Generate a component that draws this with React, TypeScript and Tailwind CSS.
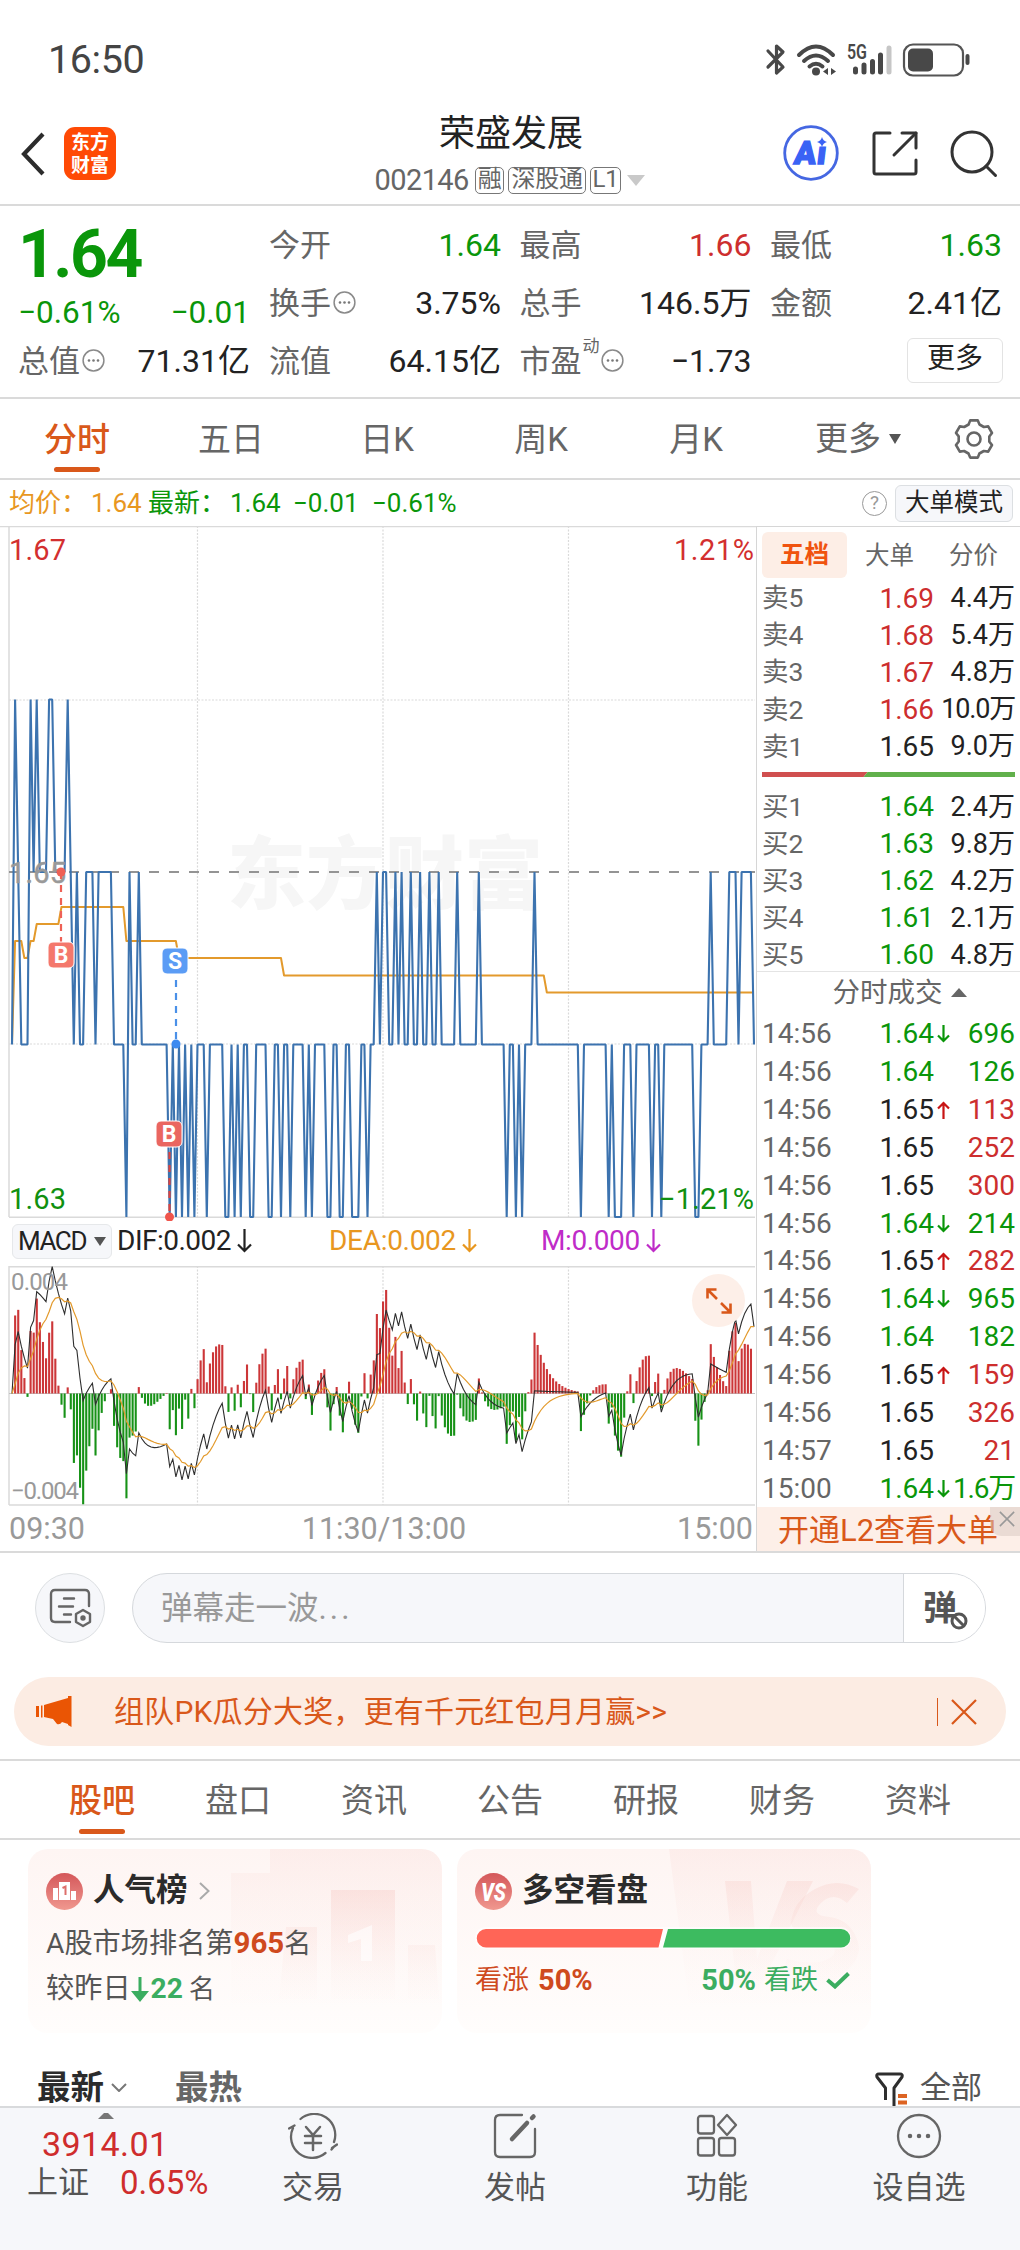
import React from 'react';

/* ---------- price series: run-length list of price levels per minute ---------- */
const RUNS =
  'L1 H1 M1 L3 H1 M1 H1 M3 H2 M4 H1 M1 L1 M1 L2 M3 L1 M5 L4 B1 M1 L2 M1 L9 B1 L1 B1 L1 B1 L1 B1 L1 B1 L3 B1 L5 B2 L1 B1 L1 B1 L2 B2 L4 B2 L2 B1 L2 B1 L4 B1 L1 B1 L4 B2 L2 B2 L2 B3 L2 B1 L2 M1 L1 M2 L2 M1 L1 M1 L2 M1 L2 M1 L2 M1 L2 M1 L5 M1 L6 M1 L8 B1 L2 B1 L1 B1 L3 M1 L14 B1 L8 B1 L1 B3 L3 B1 L5 B1 L2 B1 L10 B2 L3 M1 L5 M3 L1 M4 L1';
const LEVEL: Record<string, number> = { H: 1.66, M: 1.65, L: 1.64, B: 1.63 };
const prices: number[] = RUNS.split(' ').flatMap((r) => Array(Number(r.slice(1))).fill(LEVEL[r[0]]));

const STEP = 742 / 240;
const px = (i: number) => 12 + i * STEP;
const py = (p: number) => 1 + (1.67 - p) * 17250;

/* average price steps: [minute, y] */
const AVG: [number, number][] = [
  [0, 518], [1, 415], [3, 415], [4, 432], [5, 432], [6, 415], [7, 415], [8, 398], [15, 398], [16, 381],
  [36, 381], [37, 415], [53, 415], [54, 432], [87, 432], [88, 449.5], [172, 449.5], [173, 466.5], [240, 466.5],
];

function macd(series: number[]) {
  let e12 = series[0];
  let e26 = series[0];
  let dea = 0;
  return series.map((p) => {
    e12 += (p - e12) * (2 / 13);
    e26 += (p - e26) * (2 / 27);
    const dif = e12 - e26;
    dea += (dif - dea) * 0.2;
    return { dif, dea, bar: 2 * (dif - dea) };
  });
}
const MACD = macd(prices);
const my = (v: number) => Math.min(239, Math.max(0, 127.5 - v * 30570));
const linePts = (f: (m: { dif: number; dea: number }) => number) =>
  MACD.map((m, i) => `${px(i).toFixed(1)},${my(f(m)).toFixed(1)}`).join(' ');

const G = 'text-[#0a960a]';
const R = 'text-[#cd2e2e]';
const K = 'text-[#222]';

/* ---------- small pieces ---------- */
const Dots = () => (
  <svg className="w-[23px] h-[23px] shrink-0 ml-[2px] -mt-[2px]" viewBox="0 0 23 23">
    <circle cx="11.5" cy="11.5" r="10.4" fill="none" stroke="#8a8a8a" strokeWidth="1.5" />
    <circle cx="7" cy="11.5" r="1.3" fill="#777" /><circle cx="11.5" cy="11.5" r="1.3" fill="#777" /><circle cx="16" cy="11.5" r="1.3" fill="#777" />
  </svg>
);

const Badge = ({ children }: { children: React.ReactNode }) => (
  <span className="h-[27px] px-[2px] rounded-[5px] border-[1.5px] border-[#777] text-[24px] leading-[23px] tracking-[-0.3px] shrink-0">{children}</span>
);

function StatusBar() {
  return (
    <div className="h-[102px] pt-[18px] flex items-center pl-[48px] pr-[50px] justify-between">
      <span className="text-[39.5px] tracking-[-0.4px] text-[#444] w-[110px] leading-none">16:50</span>
      <svg className="w-[205px] h-[34px] overflow-visible" viewBox="0 0 205 34">
        <g fill="none" stroke="#484848" strokeWidth="3.2" strokeLinecap="round" strokeLinejoin="round">
          <path d="M3 8 L18 24 L11.500 30 V3 L18 9 L3 24" />
          <path d="M34 12 Q51 -5 68 12" strokeWidth="4" /><path d="M39 18 Q51 7 63 18" strokeWidth="4" /><path d="M44.500 23.500 Q51 18 57.500 23.500" strokeWidth="4" />
        </g>
        <circle cx="51" cy="28.500" r="4" fill="#484848" />
        <path d="M63 25v7l-5-3.500zM66 25v7l5-3.500z" fill="#484848" />
        <text x="82" y="16" className="text-[20px] font-semibold" fill="#484848" textLength="20" lengthAdjust="spacingAndGlyphs">5G</text>
        <g strokeWidth="5" strokeLinecap="round" stroke="#484848">
          <path d="M90.500 26v3M99 22v7M107.500 18.500v10.500M115.500 12v17" /><path d="M124 5v24" stroke="#c6c6c6" />
        </g>
        <rect x="139" y="1.500" width="59" height="31" rx="9" fill="none" stroke="#555" strokeWidth="2.200" />
        <rect x="143" y="5.500" width="25" height="23" rx="5" fill="#484848" />
        <rect x="200.500" y="11" width="4" height="11" rx="2" fill="#484848" />
      </svg>
    </div>
  );
}

function Header() {
  return (
    <div className="h-[104px] flex items-start border-b-[2px] border-[#dadada]">
      <svg className="w-[26px] h-[44px] ml-[20px] mt-[30px]" viewBox="0 0 26 44">
        <path d="M23 2 L4 22 L23 42" fill="none" stroke="#2c2c2c" strokeWidth="4.200" />
      </svg>
      <div className="ml-[18px] mt-[25px] w-[52px] h-[53px] rounded-[11px] bg-[#ff4a05] text-white text-[19px] font-bold leading-[23px] pt-[2px] flex flex-col items-center font-['Noto_Sans_CJK_SC']">
        <span>东方</span><span>财富</span>
      </div>
      <div className="ml-[260px] w-[270px] flex flex-col items-center">
        <div className="h-[63px] leading-[65px] text-[36px] text-[#222]">荣盛发展</div>
        <div className="h-[30px] flex items-center gap-[4px] text-[#666] ml-[-2px]">
          <span className="text-[29px] tracking-[-0.6px] leading-none mr-[2px]">002146</span>
          <Badge>融</Badge><Badge>深股通</Badge><Badge>L1</Badge>
          <svg className="w-[18px] h-[11px] ml-[2px]" viewBox="0 0 18 11"><path d="M0 0h18l-9 11z" fill="#c9c9c9" /></svg>
        </div>
      </div>
      <svg className="ml-[137px] mt-[23px] w-[56px] h-[56px]" viewBox="0 0 56 56">
        <circle cx="28" cy="28" r="26.300" fill="none" stroke="#4567e2" strokeWidth="2.800" />
        <text x="15" y="39" transform="skewX(-7)" className="text-[32px] font-black" fill="#3a62f5" stroke="#3a62f5" strokeWidth="1.400" textLength="32">Aı</text>
        <path d="M39 12q1 4 5 5q-4 1-5 5q-1-4-5-5q4-1 5-5z" fill="#3a62f5" />
      </svg>
      <svg className="ml-[32px] mt-[27px] w-[48px] h-[48px]" viewBox="0 0 48 48" fill="none" stroke="#333" strokeWidth="3" strokeLinecap="round" strokeLinejoin="round">
        <path d="M19 4H5q-2 0-2 2V43q0 2 2 2H43q2 0 2-2V31" /><path d="M31 4H45V19" /><path d="M45 4L23 26" />
      </svg>
      <svg className="ml-[31px] mt-[28px] w-[48px] h-[48px]" viewBox="0 0 48 48" fill="none" stroke="#333" strokeWidth="3" strokeLinecap="round">
        <circle cx="22" cy="22" r="20" /><path d="M36 36L45.500 45.500" />
      </svg>
    </div>
  );
}

const Cell = ({ label, value, color = K, icon, sup }: { label: string; value: string; color?: string; icon?: boolean; sup?: string }) => (
  <div className="flex items-center h-[58px] w-[232px] mr-[18.5px] leading-none">
    <span className="text-[31px] text-[#666]">{label}</span>
    {sup && <span className="text-[17px] text-[#666] mb-[30px] ml-[1px] -mr-[1px]">{sup}</span>}
    {icon && <Dots />}
    <span className={`ml-auto text-[32px] whitespace-nowrap ${color}`}>{value}</span>
  </div>
);

function Quote() {
  return (
    <div className="h-[193px] flex border-b-[2px] border-[#dadada] pt-[10px] pl-[18px]">
      <div className="w-[232px] mr-[19px]">
        <div className="h-[76px] text-[66px] font-bold leading-[78px] tracking-[-2.5px] text-[#0a960a] whitespace-nowrap">1.64</div>
        <div className="h-[40px] pt-[2px] flex justify-between items-center text-[31.5px] leading-none text-[#0a960a]"><span>−0.61%</span><span>−0.01</span></div>
        <div><Cell label="总值" value="71.31亿" icon /></div>
      </div>
      <div className="flex flex-col">
        <Cell label="今开" value="1.64" color={G} /><Cell label="换手" value="3.75%" icon /><Cell label="流值" value="64.15亿" />
      </div>
      <div className="flex flex-col">
        <Cell label="最高" value="1.66" color={R} /><Cell label="总手" value="146.5万" /><Cell label="市盈" value="−1.73" icon sup="动" />
      </div>
      <div className="flex flex-col">
        <Cell label="最低" value="1.63" color={G} /><Cell label="金额" value="2.41亿" />
        <div className="w-[96px] h-[45px] mt-[6px] ml-[137px] border-[1.5px] border-[#e3e3e3] rounded-[6px] text-[28px] leading-[40px] text-center text-[#222]">更多</div>
      </div>
    </div>
  );
}

function Gear() {
  const pts: string[] = [];
  for (let i = 0; i < 6; i++) {
    const a = (i * Math.PI) / 3 - Math.PI / 2;
    for (const [d, r] of [[-0.2, 19], [0.2, 19], [0.36, 15.5], [0.69, 15.5]] as const)
      pts.push(`${(20 + r * Math.cos(a + d)).toFixed(1)},${(20 + r * Math.sin(a + d)).toFixed(1)}`);
  }
  return (
    <svg className="w-[40px] h-[40px]" viewBox="0 0 40 40" fill="none" stroke="#666" strokeWidth="2.600" strokeLinejoin="round">
      <polygon points={pts.join(' ')} /><circle cx="20" cy="20" r="6.500" />
    </svg>
  );
}

function PeriodTabs() {
  return (
    <div className="h-[81px] flex text-[33px] text-[#666] border-b-[2px] border-[#dadada] leading-[81px]">
      <div className="w-[154px] text-center text-[#d9581a] font-medium flex flex-col items-center">分时
        <span className="w-[46px] h-[5px] rounded-full bg-[#d9581a] -mt-[13px]" /></div>
      <div className="w-[154px] text-center">五日</div>
      <div className="w-[158px] text-center">日K</div>
      <div className="w-[150px] text-center">周K</div>
      <div className="w-[160px] text-center">月K</div>
      <div className="w-[178px] pl-[39px] flex items-center">更多
        <svg className="w-[12px] h-[10px] ml-[8px]" viewBox="0 0 12 10"><path d="M0 0h12l-6 10z" fill="#555" /></svg></div>
      <div className="flex items-center h-[80px]"><Gear /></div>
    </div>
  );
}

function InfoRow() {
  return (
    <div className="h-[46px] flex items-center text-[26px] leading-none pl-[9px] pr-[7px] whitespace-nowrap">
      <span className="text-[#e8971f] w-[82px]">均价：</span><span className="text-[#e8971f] w-[57px]">1.64</span>
      <span className="text-[#0a960a] w-[82px]">最新：</span><span className="text-[#0a960a] w-[63px]">1.64</span>
      <span className="text-[#0a960a] w-[79px]">−0.01</span><span className="text-[#0a960a]">−0.61%</span>
      <span className="ml-auto w-[25px] h-[25px] rounded-full border-[1.7px] border-[#999] text-[#999] text-[19px] leading-[22px] text-center mr-[8px]">?</span>
      <span className="w-[118px] h-[37px] rounded-[6px] border-[1.5px] border-[#dcdfe2] bg-[#f6f7fa] text-[#222] text-[24.5px] leading-[33px] text-center">大单模式</span>
    </div>
  );
}

const Marker = ({ x, y, c, t }: { x: number; y: number; c: string; t: string }) => (
  <g>
    <rect x={x - 13} y={y - 13} width="26" height="26" rx="5" fill={c} stroke="#fff" strokeWidth="1" />
    <text x={x} y={y + 8} textAnchor="middle" fill="#fff" className="text-[23px] font-bold">{t}</text>
  </g>
);

function PriceChart() {
  return (
    <svg className="block w-[756px] h-[695px]" viewBox="0 0 756 695">
      <g stroke="#dadada" strokeWidth="1.200">
        <path d="M0 .6H756M9 0V691M9 691.300H755" strokeWidth="1.500" />
        <path d="M197.500 0V691M383 0V691M568.500 0V691M9 174H755M9 518H755" strokeDasharray="2 1.500" />
      </g>
      <text x="227" y="377" className="font-['Noto_Sans_CJK_SC'] text-[79px] font-black" fill="#f6f6f6">东方财富</text>
      <path d="M9 346H755" stroke="#949494" strokeWidth="2" strokeDasharray="10 10" />
      <polyline points={AVG.map(([i, y]) => `${px(i)},${y}`).join(' ')} fill="none" stroke="#e39a2c" strokeWidth="2" strokeLinejoin="round" />
      <polyline points={prices.map((p, i) => `${px(i).toFixed(1)},${py(p).toFixed(1)}`).join(' ')} fill="none" stroke="#3c73af" strokeWidth="2.100" strokeLinejoin="bevel" />
      <g className="text-[29px]">
        <text x="9" y="34" fill="#d32f2f" textLength="57">1.67</text>
        <text x="9" y="357" fill="#999" stroke="#999" strokeWidth=".5" textLength="57">1.65</text>
        <text x="9" y="683" fill="#109010" textLength="57">1.63</text>
        <text x="754" y="34" fill="#d32f2f" textAnchor="end" textLength="80">1.21%</text>
        <text x="754" y="683" fill="#109010" textAnchor="end" textLength="95">−1.21%</text>
      </g>
      <g strokeWidth="2.200" strokeDasharray="7 6">
        <path d="M61 346V416" stroke="#ee6156" /><path d="M176 454V518" stroke="#4a90e8" /><path d="M169.500 626V691" stroke="#dc4540" />
      </g>
      <circle cx="61" cy="346" r="4.500" fill="#ee6156" /><circle cx="176" cy="518" r="4.500" fill="#3c8af0" /><circle cx="169.500" cy="691" r="4.500" fill="#f0554c" />
      <Marker x={61} y={429} c="#f4786c" t="B" /><Marker x={175} y={435} c="#5b9cf5" t="S" /><Marker x={169} y={608} c="#ea6660" t="B" />
    </svg>
  );
}

const Down = ({ s }: { s: string }) => (
  <svg className="w-[15px] h-[25px] ml-[6px]" viewBox="0 0 15 25" fill="none" stroke={s} strokeWidth="2.200"><path d="M7.500 1V23M1 16.500L7.500 23L14 16.500" /></svg>
);

function MacdPanel() {
  return (
    <>
      <div className="h-[45px] flex items-center text-[27px] leading-none pl-[12px] pb-[6px] whitespace-nowrap">
        <span className="w-[100px] h-[35px] mt-[1px] rounded-[6px] border-[1.500px] border-[#e6e8ea] bg-[#f6f7fa] flex items-center justify-center text-[#222] text-[26px] tracking-[-1.4px]">MACD
          <svg className="w-[12px] h-[9px] ml-[8px]" viewBox="0 0 12 9"><path d="M0 0h12l-6 9z" fill="#555" /></svg></span>
        <span className="text-[#222] ml-[5px] w-[212px] flex items-center text-[28px] tracking-[-0.5px]">DIF:0.002<Down s="#222" /></span>
        <span className="text-[#e8971f] w-[212px] flex items-center text-[28px] tracking-[-0.3px]">DEA:0.002<Down s="#e8971f" /></span>
        <span className="text-[#bf2cc8] flex items-center text-[28px] tracking-[-0.4px]">M:0.000<Down s="#bf2cc8" /></span>
      </div>
      <div className="relative h-[240px]">
        <svg className="block w-[756px] h-[240px]" viewBox="0 0 756 240">
          <path d="M9 .7H755M9 0V239M9 239H755" stroke="#dadada" strokeWidth="1.500" />
          <path d="M197.500 0V239M383 0V239M568.500 0V239" stroke="#dadada" strokeWidth="1.200" strokeDasharray="2 1.500" />
          <path d="M9 127.500H755" stroke="#b5b5b5" strokeWidth=".8" />
          {MACD.slice(0, 240).map((m, i) => {
            const y = my(m.bar);
            return <rect key={i} x={px(i) - 1} y={Math.min(y, 127.5)} width="2.100" height={Math.abs(y - 127.5)} fill={m.bar > 0 ? '#cc3638' : '#179217'} />;
          })}
          <polyline points={linePts((m) => m.dif)} fill="none" stroke="#2e2e2e" strokeWidth="1.100" />
          <polyline points={linePts((m) => m.dea)} fill="none" stroke="#e39a2c" strokeWidth="1.200" />
          <g fill="#999" className="text-[24px]"><text x="11" y="24" textLength="57">0.004</text><text x="11" y="233" textLength="68">−0.004</text></g>
        </svg>
        <div className="absolute left-[692px] top-[8px] w-[53px] h-[53px] rounded-full bg-[#fdefe8]">
          <svg className="w-[53px] h-[53px]" viewBox="0 0 53 53" fill="none" stroke="#d9581a" strokeWidth="2.600"><path d="M24.500 15.500H15.500V24.500M15.500 15.500L25 25M29 29L38.500 38.500M29.500 38.500H38.500V29.500" /></svg>
        </div>
      </div>
      <div className="h-[45px] pt-[2px] flex items-center justify-between text-[30.5px] text-[#999] pl-[9px] pr-[3px] leading-none">
        <span>09:30</span><span className="pl-[6px]">11:30/13:00</span><span>15:00</span>
      </div>
    </>
  );
}

const SELL = [['卖5', '1.69', '4.4万', R], ['卖4', '1.68', '5.4万', R], ['卖3', '1.67', '4.8万', R], ['卖2', '1.66', '10.0万', R], ['卖1', '1.65', '9.0万', K]];
const BUY = [['买1', '1.64', '2.4万'], ['买2', '1.63', '9.8万'], ['买3', '1.62', '4.2万'], ['买4', '1.61', '2.1万'], ['买5', '1.60', '4.8万']];
const TRADES = [
  ['14:56', '1.64', 'd', '696', 'g'], ['14:56', '1.64', '', '126', 'g'], ['14:56', '1.65', 'u', '113', 'r'], ['14:56', '1.65', '', '252', 'r'],
  ['14:56', '1.65', '', '300', 'r'], ['14:56', '1.64', 'd', '214', 'g'], ['14:56', '1.65', 'u', '282', 'r'], ['14:56', '1.64', 'd', '965', 'g'],
  ['14:56', '1.64', '', '182', 'g'], ['14:56', '1.65', 'u', '159', 'r'], ['14:56', '1.65', '', '326', 'r'], ['14:57', '1.65', '', '21', 'r'], ['15:00', '1.64', 'd', '1.6万', 'g'],
];

const Level = ({ n, p, v, c }: { n: string; p: string; v: string; c: string }) => (
  <div className="h-[37.1px] flex items-center leading-none text-[27px] whitespace-nowrap">
    <span className="text-[#666] text-[26.5px] w-[90px]">{n}</span>
    <span className={`w-[82px] text-right text-[28px] ${c}`}>{p}</span>
    <span className={`text-[#222] ml-auto ${v.length > 4 ? 'tracking-[-1.2px]' : ''}`}>{v}</span>
  </div>
);

function OrderBook() {
  return (
    <div className="w-[264px] h-[1025px] border-l-[1.5px] border-[#d6d6d6] flex flex-col border-t-[1.500px]">
      <div className="pl-[5px] pr-[5px]">
        <div className="flex items-center mt-[5px] h-[46px] text-[24.5px] text-[#666] leading-none">
          <span className="w-[85px] h-[46px] rounded-[6px] bg-[#fdeee6] text-[#f0530f] font-bold leading-[46px] text-center">五档</span>
          <span className="w-[84px] pl-[18px] pt-[2px]">大单</span><span className="pl-[18px] pt-[2px]">分价</span>
        </div>
        <div className="mt-[2px]">{SELL.map(([n, p, v, c]) => <Level key={n} n={n} p={p} v={v} c={c} />)}</div>
        <div className="mt-[7px] h-[5px] flex">
          <svg className="w-[254px] h-[5px]" viewBox="0 0 254 5"><path d="M0 0H106L102 5H0z" fill="#d04f4f" /><path d="M106 0H254V5H102z" fill="#61b04b" /></svg>
        </div>
        <div className="mt-[11px]">{BUY.map(([n, p, v]) => <Level key={n} n={n} p={p} v={v} c={G} />)}</div>
      </div>
      <div className="border-t-[1.5px] border-[#e4e4e4] h-[44px] -mt-[3px] flex items-center justify-center text-[27.5px] text-[#666] leading-none pl-[22px]">分时成交
        <svg className="w-[16px] h-[9px] ml-[8px]" viewBox="0 0 16 9"><path d="M0 9h16l-8-9z" fill="#666" /></svg>
      </div>
      <div className="pl-[5px] pr-[5px] pt-[2px]">
        {TRADES.map(([t, p, d, v, c], i) => (
          <div key={i} className="h-[37.85px] flex items-center text-[28px] leading-none whitespace-nowrap">
            <span className="w-[90px] text-[#666]">{t}</span>
            <span className={`w-[82px] text-right ${p === '1.65' ? K : G}`}>{p}</span>
            <span className="w-[18px] pl-[3px]">
              {d && <svg className={`w-[13px] h-[18px] ${d === 'u' ? 'rotate-180' : ''}`} viewBox="0 0 13 18" fill="none" stroke={d === 'u' ? '#c81414' : '#0a960a'} strokeWidth="2.200"><path d="M6.500 0V16M1 10.500L6.500 16L12 10.500" /></svg>}
            </span>
            <span className={`ml-auto ${v.includes('万') ? 'tracking-[-1.2px]' : ''} ${c === 'g' ? G : R}`}>{v}</span>
          </div>
        ))}
      </div>
      <div className="mt-auto h-[45px] pt-[2px] bg-[#fdefe8] flex items-center justify-center text-[31px] text-[#d9581a] leading-none pr-[1px] relative whitespace-nowrap">
        开通L2查看大单
        <span className="absolute right-0 top-0 w-[30px] h-[29px] rounded-bl-[12px] bg-[#d8c8c0]/50">
          <svg className="w-[16px] h-[16px] mt-[4px] ml-[9px]" viewBox="0 0 18 18" stroke="#999" strokeWidth="1.800"><path d="M1 1L17 17M17 1L1 17" /></svg>
        </span>
      </div>
    </div>
  );
}

function Comment() {
  return (
    <div className="h-[126px] border-t-[2px] border-[#dadada] flex items-start pt-[20px] pl-[35px]">
      <div className="w-[70px] h-[70px] rounded-full border-[1.500px] border-[#dcdfe2] bg-[#f6f7fa] flex items-center justify-center">
        <svg className="w-[44px] h-[42px]" viewBox="0 0 44 42" fill="none" stroke="#666" strokeWidth="2.400" strokeLinecap="round">
          <path d="M41 19V7q0-4-4-4H7Q3 3 3 7V31q0 4 4 4H22" /><path d="M16 11.500h10M11 19.500h14M16 27.500h7" />
          <path d="M35 23l7 4v8l-7 4l-7-4v-8z" strokeLinejoin="round" /><circle cx="35" cy="31" r="1.500" fill="#666" />
        </svg>
      </div>
      <div className="ml-[27px] w-[854px] h-[70px] rounded-full border-[1.500px] border-[#d5d8dc] bg-[#f6f7fa] flex overflow-hidden">
        <div className="flex-1 pl-[28px] text-[31.5px] leading-[69px] text-[#999]">弹幕走一波<span className="tracking-[3px]">...</span></div>
        <div className="w-[82px] bg-white border-l-[1.500px] border-[#d5d8dc] pl-[19px] flex items-center text-[34px] font-bold text-[#555] leading-none">弹
          <svg className="w-[18px] h-[18px] -ml-[7px] mt-[26px]" viewBox="0 0 18 18" fill="#fff" stroke="#555" strokeWidth="3"><circle cx="9" cy="9" r="7" /><path d="M4 4L14 14" /></svg>
        </div>
      </div>
    </div>
  );
}

function Banner() {
  return (
    <div className="h-[82px]">
      <div className="mx-[14px] h-[69px] rounded-full bg-[#fcece3] flex items-center text-[#d9581a] leading-none">
        <svg className="w-[36px] h-[31px] ml-[22px]" viewBox="0 0 36 31" fill="#ea5504"><path d="M35.500 0V31L32 29V28L26 26q-2 3-5 2l-4-5L8 21V9L32 2V0zM0 10h3v11H0zM5 9.500h1.500v12H5z" /></svg>
        <span className="ml-[42px] text-[30px] tracking-[0.2px] whitespace-nowrap">组队PK瓜分大奖，更有千元红包月月赢&gt;&gt;</span>
        <span className="ml-auto w-[1.500px] h-[28px] bg-[#d9581a]" />
        <svg className="w-[26px] h-[26px] ml-[13px] mr-[29px]" viewBox="0 0 26 26" stroke="#d9581a" strokeWidth="2.200"><path d="M1 1L25 25M25 1L1 25" /></svg>
      </div>
    </div>
  );
}

function SectionTabs() {
  return (
    <div className="h-[81px] border-y-[2px] border-[#dadada] flex pl-[34px] text-[33px] leading-[80px] text-[#666]">
      {['股吧', '盘口', '资讯', '公告', '研报', '财务', '资料'].map((t, i) => (
        <div key={t} className={`w-[136px] flex flex-col items-center ${i === 0 ? 'text-[#d9581a] font-medium' : ''}`}>{t}
          {i === 0 && <span className="w-[46px] h-[5px] rounded-full bg-[#d9581a] -mt-[12px]" />}</div>
      ))}
    </div>
  );
}

const CardBack = ({ vs }: { vs?: boolean }) => (
  <svg className="absolute inset-0 w-[414px] h-[184px]" viewBox="0 0 414 184">
    <defs>
      <linearGradient id={vs ? 'gb' : 'ga'} x1="0" y1="0" x2="0" y2="1"><stop offset="0" stopColor="#f6c3bd" stopOpacity=".34" /><stop offset="1" stopColor="#fbe4e0" stopOpacity=".04" /></linearGradient>
    </defs>
    {vs ? (
      <g fill="url(#gb)">
        <path d="M212 0H414V154H232z" opacity=".45" />
        <path d="M268 32h26l6 78l30-78h26L302 140h-22z" opacity=".8" />
        <path d="M402 40q-22-12-44 0t-24 34q4 16 28 20t12 14-44 2l-8 22q34 14 60-4t18-38-28-22-8-14 26 0z" opacity=".8" />
      </g>
    ) : (
      <g fill="url(#ga)">
        <path d="M242 0H414V154H203V24H242z" opacity=".45" />
        <path d="M303 41h64v109h-64zM258 78h31v72h-38zM380 96h27l4 54h-31z" fillRule="evenodd" />
        <path d="M320 86l24-10v36h-11V90l-13 4z" fill="#fff" opacity=".6" />
      </g>
    )}
  </svg>
);

function Cards() {
  return (
    <div className="flex pl-[28px] pt-[9px] h-[227px] gap-[15px] text-[28.2px] leading-none text-[#555]">
      <div className="relative w-[414px] h-[184px] rounded-[20px] bg-gradient-to-b from-[#fef5f3] to-[#fffdfc] overflow-hidden">
        <CardBack />
        <div className="relative pl-[18px] pt-[21px]">
          <div className="flex items-center h-[42px]">
            <svg className="w-[37px] h-[37px]" viewBox="0 0 37 37">
              <defs><linearGradient id="ic" x1="0" y1="0" x2="0" y2="1"><stop offset="0" stopColor="#d4575a" /><stop offset="1" stopColor="#f0988f" /></linearGradient></defs>
              <circle cx="18.500" cy="18.500" r="18.500" fill="url(#ic)" /><path d="M13 9h11v18H13zM7 15h5v12H7zM25 18h5v9H25z" fill="#fff" /><path d="M16.500 15l3-1.500V22" fill="none" stroke="#dd6f6b" strokeWidth="2" />
            </svg>
            <span className="ml-[10px] text-[31.500px] font-bold text-[#2b2b2b]">人气榜</span>
            <svg className="w-[11px] h-[18px] ml-[11px]" viewBox="0 0 11 18" fill="none" stroke="#aaa" strokeWidth="2"><path d="M1 1L9.500 9L1 17" /></svg>
          </div>
          <div className="h-[44px] mt-[10px] flex items-center">A股市场排名第<b className="text-[#cf4a1e] text-[29.5px]">965</b><span className="text-[27px]">名</span></div>
          <div className="h-[44px] mt-[1px] flex items-center">较昨日
            <svg className="w-[18px] h-[25px]" viewBox="0 0 18 25" fill="#3bad60"><path d="M7.500 0h3v14H18L9 25L0 14h7.500z" /></svg>
            <b className="text-[#3bad60] mx-[2px]">22</b><span className="ml-[4px] text-[26px]">名</span></div>
        </div>
      </div>
      <div className="relative w-[414px] h-[184px] rounded-[20px] bg-gradient-to-b from-[#fef5f3] to-[#fffdfc] overflow-hidden">
        <CardBack vs />
        <div className="relative pl-[18px] pt-[21px]">
          <div className="flex items-center h-[42px]">
            <svg className="w-[37px] h-[37px]" viewBox="0 0 37 37"><circle cx="18.500" cy="18.500" r="18.500" fill="url(#ic)" /><text x="6" y="28" textLength="25" lengthAdjust="spacingAndGlyphs" className="text-[25px] font-black italic" fill="#fff">VS</text></svg>
            <span className="ml-[10px] text-[31.500px] font-bold text-[#2b2b2b]">多空看盘</span>
          </div>
          <svg className="block w-[376px] h-[23px] mt-[15px]" viewBox="0 0 376 23">
            <rect width="376" height="22" rx="10" fill="#fff" opacity=".6" />
            <path d="M11 2H188L183.500 20.500H11A9.250 9.250 0 0 1 11 2z" fill="#ff6557" /><path d="M193 2H366A9.250 9.250 0 0 1 366 20.500H188z" fill="#3dbb60" />
          </svg>
          <div className="flex items-center w-[375px] h-[44px] mt-[8px] text-[27px]">
            <span className="text-[#cf4a1e]">看涨</span><b className="text-[#cf4a1e] ml-[9px] text-[29px]">50%</b>
            <b className="text-[#3bad60] ml-auto mr-[8px] text-[29px]">50%</b><span className="text-[#3bad60]">看跌</span>
            <svg className="w-[24px] h-[17px] ml-[8px]" viewBox="0 0 24 17" fill="none" stroke="#3bad60" strokeWidth="4"><path d="M1.500 8L9 14.500L22.500 1.500" /></svg>
          </div>
        </div>
      </div>
    </div>
  );
}

function FeedTabs() {
  return (
    <div className="h-[39px] pt-[2px] flex items-center overflow-hidden leading-none pl-[37px] pr-[38px] text-[33.500px] font-bold">
      <span className="text-[#2b2b2b]">最新</span>
      <svg className="w-[16px] h-[9px] ml-[7px] mr-[48px]" viewBox="0 0 16 9" fill="none" stroke="#777" strokeWidth="2"><path d="M1 1L8 8L15 1" /></svg>
      <span className="text-[#666]">最热</span>
      <svg className="w-[33px] h-[36px] ml-auto mt-[4px]" viewBox="0 0 33 36"><path d="M10.500 28V16L2 5Q1 2 4 2H25Q28 2 27 5L19 16V36" fill="none" stroke="#2e2e2e" strokeWidth="3" strokeLinejoin="round" /><path d="M23 22h9v4h-9zM23 28.500h9v4h-9z" fill="#dd6423" /></svg>
      <span className="ml-[12px] text-[31px] font-normal text-[#555]">全部</span>
    </div>
  );
}

const Nav = ({ label, children }: { label: string; children: React.ReactNode }) => (
  <div className="w-[202px] flex flex-col items-center pt-[5px]">
    <svg className="w-[50px] h-[46px]" viewBox="0 0 50 46" fill="none" stroke="#666" strokeWidth="2.300" strokeLinecap="round" strokeLinejoin="round">{children}</svg>
    <span className="text-[31px] leading-[58px] text-[#555]">{label}</span>
  </div>
);

function BottomBar() {
  return (
    <div className="h-[145px] border-t-[2px] border-[#d8dadc] bg-[#f6f7fa] flex">
      <div className="w-[212px] flex flex-col leading-none whitespace-nowrap">
        <svg className="w-[16px] h-[6px] ml-[98px] mt-[5px]" viewBox="0 0 16 6"><path d="M0 6L6 0H10L16 6z" fill="#777" /></svg>
        <span className="text-[34px] tracking-[0.4px] text-[#cf2d2d] ml-[42px] mt-[8px]">3914.01</span>
        <div className="flex items-center ml-[27px] mt-[5px]"><span className="text-[31px] text-[#555]">上证</span><span className="text-[33px] text-[#cf2d2d] ml-[31px]">0.65%</span></div>
      </div>
      <Nav label="交易">
        <path d="M12.500 6A21 21 0 0 1 46 29M46 33.500L43.500 36.500M37.500 40A21 21 0 0 1 5 15M1 15.500L6.500 12.500M44 35L49 31.500" />
        <path d="M18 14L25 22L32 14M17 23H33M17 30H33M25 22V37" strokeWidth="2.500" />
      </Nav>
      <Nav label="发帖">
        <path d="M32 2H10Q5 2 5 7V39Q5 44 10 44H40Q45 44 45 39V16" /><path d="M22 26L37 10" strokeWidth="4.500" /><path d="M42 5L43.500 3.500" strokeWidth="4.500" />
      </Nav>
      <Nav label="功能">
        <rect x="6" y="3" width="16" height="17.500" rx="2.500" /><rect x="6" y="25" width="16" height="17.500" rx="2.500" /><rect x="27" y="25" width="16" height="17.500" rx="2.500" /><path d="M35 2L44 12L35 22L26 12z" />
      </Nav>
      <Nav label="设自选">
        <circle cx="25" cy="23" r="21" /><g fill="#666" strokeWidth="1.500"><circle cx="16" cy="23" r="1.500" /><circle cx="25" cy="23" r="1.500" /><circle cx="34" cy="23" r="1.500" /></g>
      </Nav>
    </div>
  );
}

export default function App() {
  return (
    <div className="w-[1020px] h-[2250px] overflow-hidden bg-white font-['Roboto','Noto_Sans_CJK_SC',sans-serif]">
      <StatusBar />
      <Header />
      <Quote />
      <PeriodTabs />
      <InfoRow />
      <div className="flex h-[1025px]">
        <div className="w-[756px]"><PriceChart /><MacdPanel /></div>
        <OrderBook />
      </div>
      <Comment />
      <Banner />
      <SectionTabs />
      <Cards />
      <FeedTabs />
      <BottomBar />
    </div>
  );
}
